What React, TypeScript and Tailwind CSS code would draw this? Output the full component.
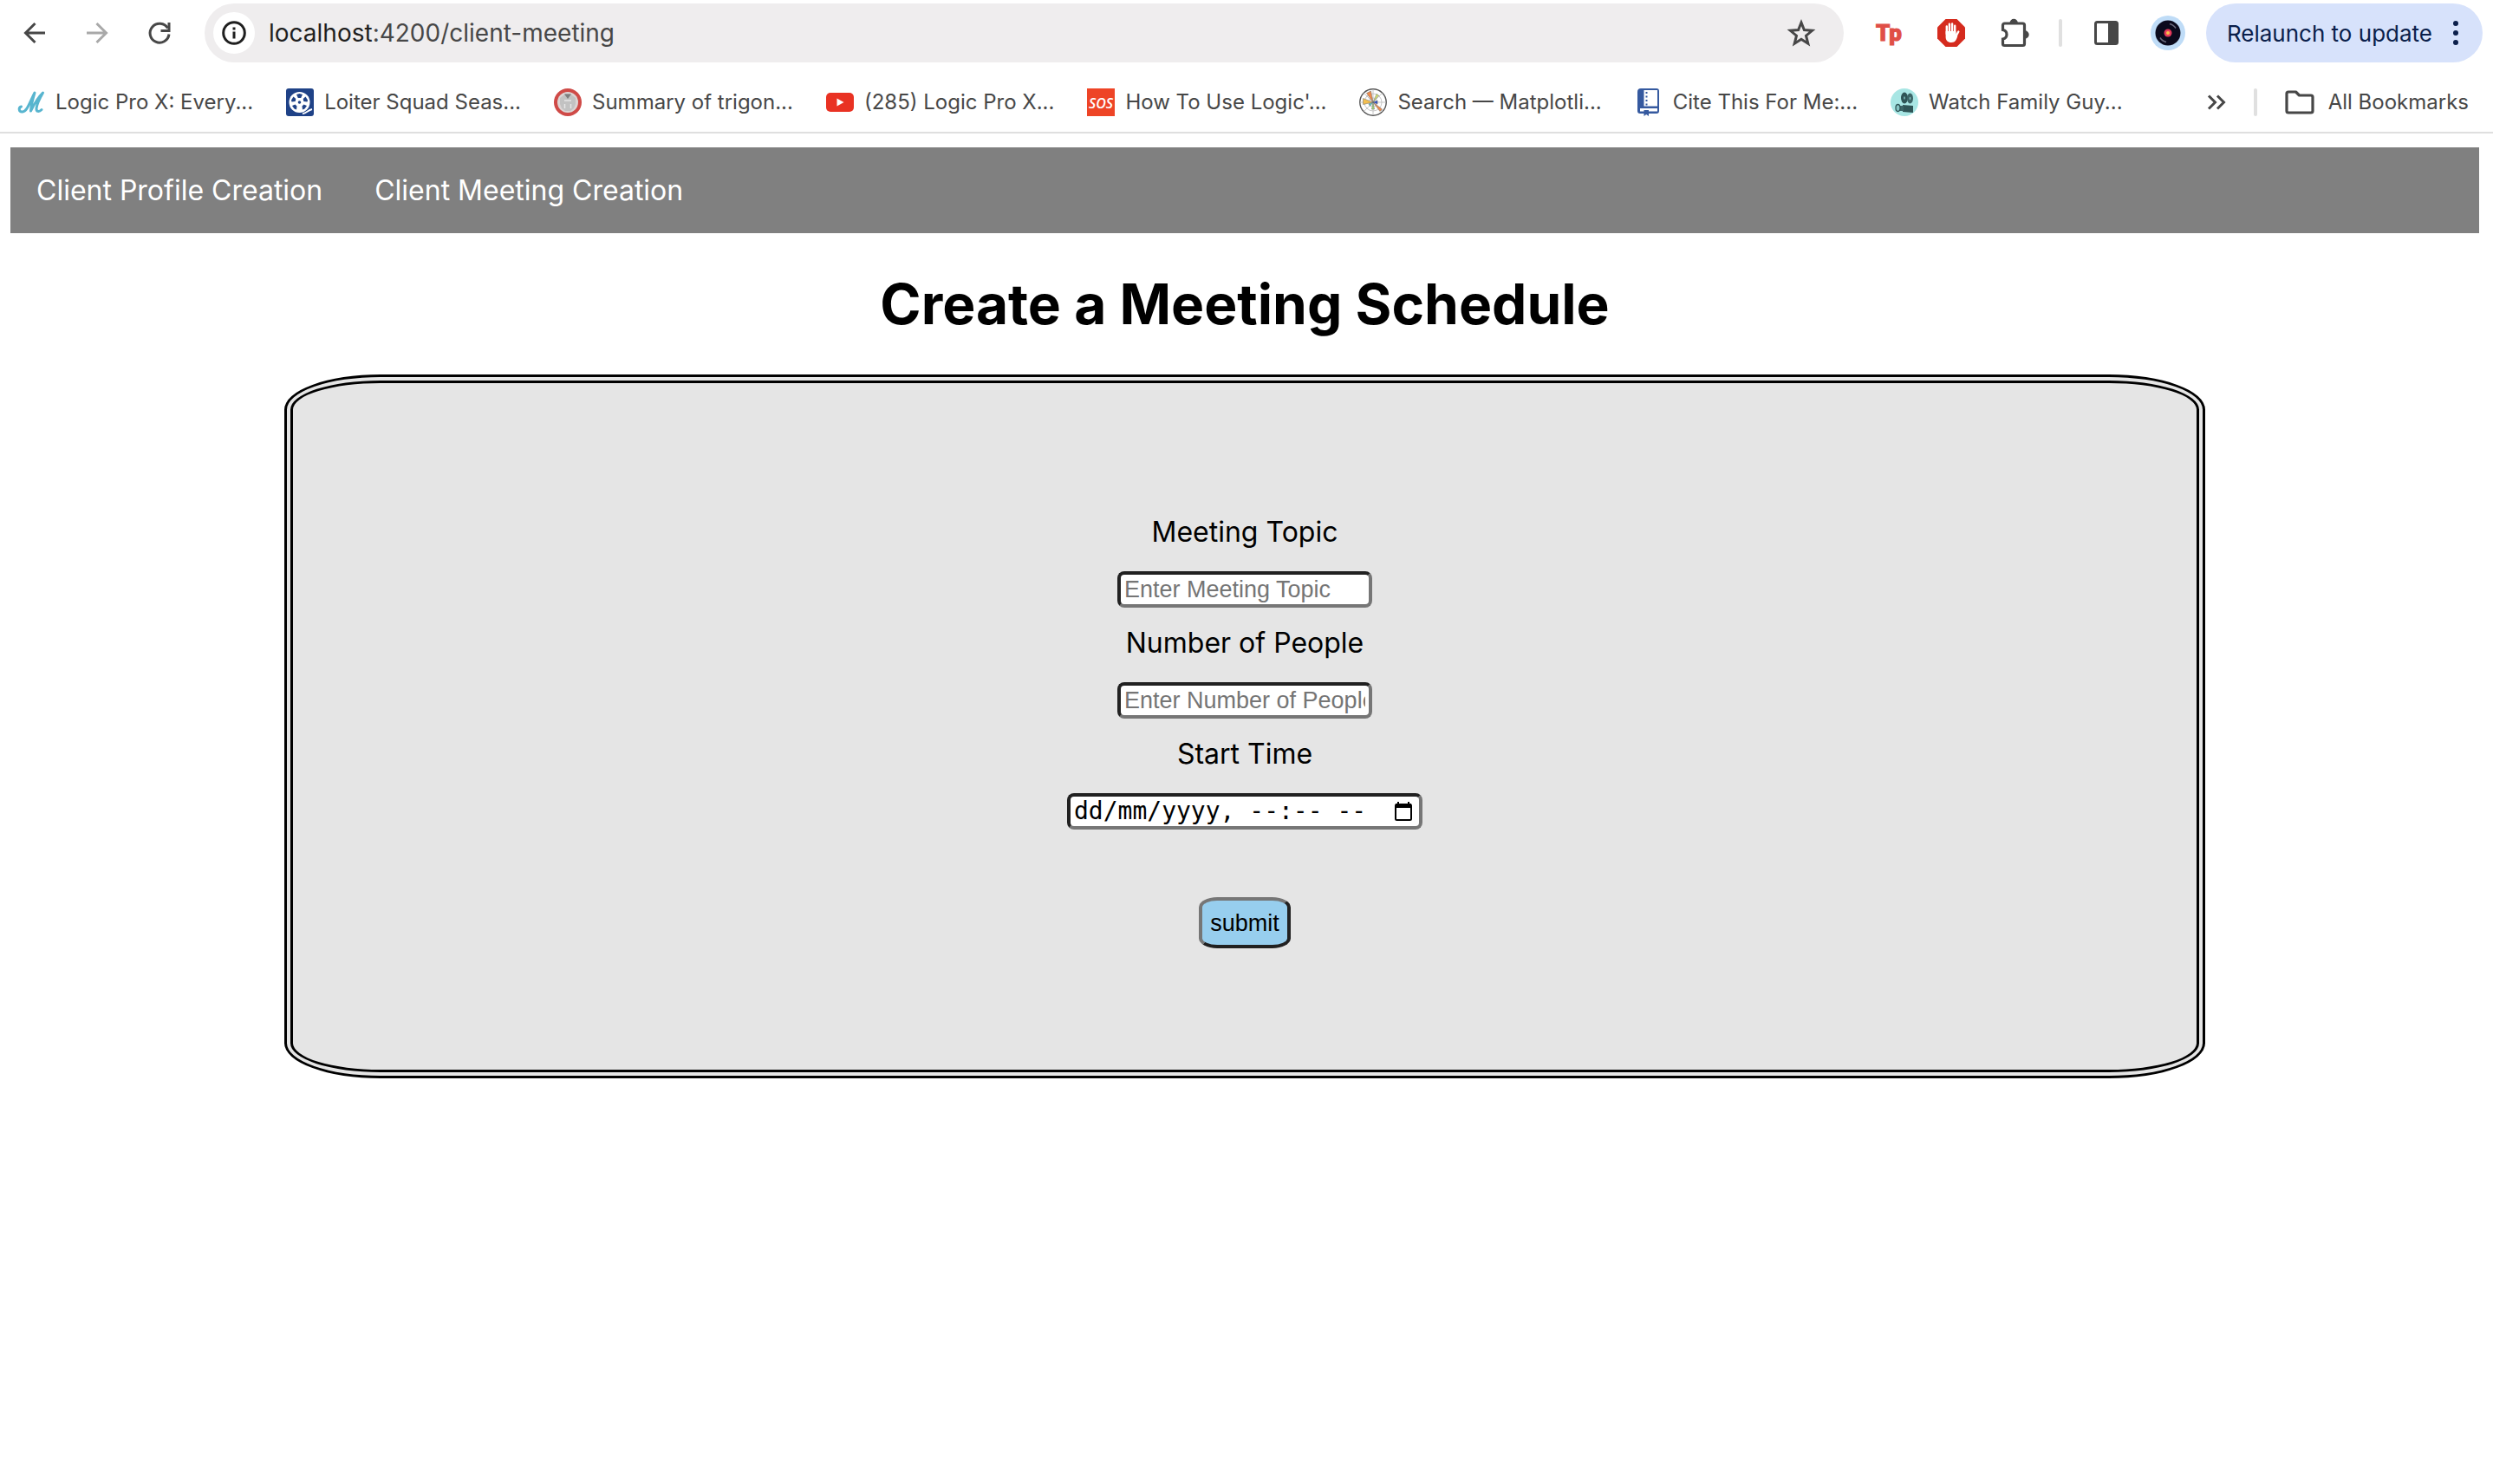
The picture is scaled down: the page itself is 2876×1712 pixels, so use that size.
import React from 'react';

const ink = '#474747';

function BackIcon({ color = ink, flip = false }: { color?: string; flip?: boolean }) {
  return (
    <svg width="32" height="32" viewBox="0 0 32 32" fill="none" stroke={color} strokeWidth="3" className={flip ? 'rotate-180' : ''}>
      <path d="M28 16H6M16.5 5L5.5 16l11 11" />
    </svg>
  );
}

function ReloadIcon() {
  return (
    <svg width="32" height="32" viewBox="0 0 32 32" fill="none" stroke={ink} strokeWidth="3">
      <path d="M25.500 10.500A11 11 0 1 0 27 17.500" />
      <path d="M27 4v9.500h-9.500" />
    </svg>
  );
}

function InfoIcon() {
  return (
    <svg width="28" height="28" viewBox="0 0 28 28" fill="none" stroke="#1f1f1f" strokeWidth="3">
      <circle cx="14" cy="14" r="12.300" />
      <path d="M14 12.500v8M14 7.500v3" />
    </svg>
  );
}

function StarIcon() {
  return (
    <svg width="34" height="34" viewBox="0 0 34 34" fill="none" stroke={ink} strokeWidth="3">
      <path d="M17 5l3.400 8.600 9.200.7-7.100 5.900 2.300 9L17 24.300l-7.800 4.900 2.300-9-7.100-5.900 9.200-.7z" />
    </svg>
  );
}

function TpIcon() {
  return (
    <svg width="32" height="32" viewBox="0 0 32 32">
      <text x="1" y="25" fill="#e04f47" stroke="#e04f47" strokeWidth="1" fontFamily="Roboto, sans-serif" fontWeight="900" fontSize="26">Tp</text>
    </svg>
  );
}

function HandIcon() {
  return (
    <svg width="32" height="32" viewBox="0 0 32 32">
      <path d="M9.500 0h13L32 9.500v13L22.500 32h-13L0 22.500v-13z" fill="#d52b1e" />
      <g stroke="#fff" strokeWidth="2.400" strokeLinecap="round" fill="none">
        <path d="M10.800 17V8.500M13.900 16V5.800M17.100 16V5.500M20.200 17V7.800M20.500 21.500l3.800-7" />
      </g>
      <path d="M9.600 14h11.800v6l2-1c-1.200 4.500-2.600 8-7.200 8-4.400 0-6.600-2.500-6.600-6.500z" fill="#fff" />
    </svg>
  );
}

function PuzzleIcon() {
  return (
    <svg width="36" height="36" viewBox="0 0 36 36">
      <path d="M3.500 9a2 2 0 0 1 2-2h21a2 2 0 0 1 2 2v21.500a2 2 0 0 1-2 2h-21a2 2 0 0 1-2-2v-5.500c6-1 6-9.500 0-10.500z" fill="none" stroke={ink} strokeWidth="3.200" />
      <path d="M11.500 6.500a4.700 4.700 0 0 1 9.400 0zM29 15.300a4.700 4.700 0 0 1 0 9.400z" fill={ink} />
    </svg>
  );
}

function PanelIcon() {
  return (
    <svg width="30" height="30" viewBox="0 0 30 30">
      <rect x="2.500" y="2.500" width="25" height="25" rx="2" fill="none" stroke={ink} strokeWidth="3" />
      <rect x="17" y="2" width="11" height="26" fill={ink} />
    </svg>
  );
}

function VinylIcon() {
  return (
    <svg width="40" height="40" viewBox="0 0 40 40">
      <circle cx="20" cy="20" r="20" fill="#bfdcf7" />
      <circle cx="20" cy="20" r="14.500" fill="#0b0a1c" />
      <path d="M22 9.500a11 11 0 0 1 7 5M18 30.500a11 11 0 0 1-7-5" stroke="#6a6a7c" strokeWidth="1.500" fill="none" />
      <circle cx="20" cy="20" r="4.500" fill="#e5395c" />
      <circle cx="20" cy="20" r="2" fill="#f7c04a" />
    </svg>
  );
}

function ScriptLogo() {
  return (
    <svg width="32" height="32" viewBox="0 0 32 32" fill="none" stroke="#58b5cf" strokeWidth="3" strokeLinecap="round" strokeLinejoin="round">
      <path d="M4.500 21C1 22 1.500 27.500 6 27c5-.5 7-8 14-22-2.500 8-4 14-4.500 21C19 19 23 11 29.500 5c-4 7-7 13-7.500 18-.3 4 3 4.500 6 1.500" />
    </svg>
  );
}

function ReelLogo() {
  return (
    <svg width="32" height="32" viewBox="0 0 32 32">
      <rect width="32" height="32" rx="3" fill="#1f4287" />
      <circle cx="15.500" cy="16" r="12" fill="#fff" />
      <path d="M19 29c4 .5 6-4 11-5" stroke="#fff" strokeWidth="1.800" fill="none" />
      <g fill="#1f4287">
        <circle cx="15.500" cy="16" r="1.800" />
        <path d="M12 7l3.500-1 3.500 1-1.800 4h-3.400zM22.500 9.500l2.500 4-.5 2-4.200-.5-.6-3zM8.500 9.500l-2.500 4 .5 2 4.200-.5.600-3zM24 20l-2.500 3.500-2.500 1-.5-4 2-2zM7 20l2.500 3.500 2.500 1 .5-4-2-2z" />
      </g>
    </svg>
  );
}

function CrestLogo() {
  return (
    <svg width="32" height="32" viewBox="0 0 32 32">
      <circle cx="16" cy="16" r="16" fill="#cf4a47" />
      <circle cx="16" cy="16" r="12" fill="#dcd5d4" />
      <path d="M7 11l4-3 2-2h6l2 2 4 3v7l-2 5-4 3h-6l-4-3-2-5z" fill="#c2c2c2" />
      <path d="M12 6.500h8L16 12z" fill="#7d7d7d" />
      <path d="M12 14h8M12.500 18v5M19.500 18v5" stroke="#e6e6e6" strokeWidth="1.500" />
    </svg>
  );
}

function VideoLogo() {
  return (
    <svg width="32" height="32" viewBox="0 0 32 32">
      <rect y="5" width="32" height="22" rx="5" fill="#e93223" />
      <path d="M12.500 11.500v9l8-4.500z" fill="#fff" />
    </svg>
  );
}

function SosLogo() {
  return (
    <svg width="32" height="32" viewBox="0 0 32 32">
      <rect width="32" height="32" fill="#ee4426" />
      <text x="16" y="23" textAnchor="middle" fill="#fff" fontFamily="'Open Sans', sans-serif" fontSize="16" fontWeight="600" fontStyle="italic">SOS</text>
    </svg>
  );
}

function PlotLogo() {
  return (
    <svg width="32" height="32" viewBox="0 0 32 32">
      <circle cx="16" cy="16" r="15.200" fill="#fff" stroke="#555" strokeWidth="1.400" />
      <g fill="none" stroke="#b9b9b9" strokeWidth="0.800">
        <circle cx="16" cy="16" r="5" />
        <circle cx="16" cy="16" r="10" />
        <path d="M16 1v30M1 16h30M5.400 5.400l21.200 21.200M26.600 5.400L5.400 26.600" />
      </g>
      <g stroke="#666" strokeWidth="0.500">
        <path d="M16 16L8.500 5.500l5-2.500z" fill="#f08c4b" />
        <path d="M16 16L4.500 11.500v7z" fill="#f3bf4f" />
        <path d="M16 16l4-9.500 2.500 1.500z" fill="#d8e86a" />
        <path d="M16 16l10.500 8-2.500 2.500z" fill="#f08c4b" />
        <path d="M16 16l-1.500 8h3z" fill="#a6dd78" />
        <path d="M16 16l5-2v4z" fill="#2a4fd0" />
        <path d="M16 16l-5 2 1.500 2.500z" fill="#5fc9c9" />
      </g>
    </svg>
  );
}

function BookLogo() {
  return (
    <svg width="32" height="32" viewBox="0 0 32 32">
      <path d="M7 0h18a3 3 0 0 1 3 3v23a3 3 0 0 1-3 3H16v3l-2.800-2L10.500 32v-3H6a3 3 0 0 1-3-3V4a4 4 0 0 1 4-4z" fill="#35599f" />
      <path d="M10.500 2H26v18.500H10.500zM6 23h20v3.500H16V25h-5.500v1.500H6z" fill="#fff" />
      <path d="M13.500 4v16" stroke="#35599f" strokeWidth="2" strokeDasharray="2 2.500" />
    </svg>
  );
}

function CameraLogo() {
  return (
    <svg width="32" height="32" viewBox="0 0 32 32">
      <circle cx="16" cy="16" r="16" fill="#a8e6e4" />
      <ellipse cx="16" cy="11" rx="4" ry="6.500" fill="#2f5557" />
      <ellipse cx="22.500" cy="11.500" rx="3.500" ry="6" fill="#3c6567" />
      <ellipse cx="16" cy="11" rx="0.800" ry="1.800" fill="#86c4c3" />
      <ellipse cx="22.500" cy="11.500" rx="0.800" ry="1.800" fill="#86c4c3" />
      <path d="M14 19l12 1v8l-12-1z" fill="#2f5557" />
      <path d="M9 20h6v6H9z" fill="#3c6567" />
      <ellipse cx="8.500" cy="22.500" rx="2.500" ry="4" fill="#86c4c3" stroke="#2f5557" strokeWidth="1.300" />
    </svg>
  );
}

function FolderIcon() {
  return (
    <svg width="34" height="28" viewBox="0 0 34 28" fill="none" stroke={ink} strokeWidth="3.200" strokeLinejoin="round">
      <path d="M2 4a2 2 0 0 1 2-2h8.500l4 4H30a2 2 0 0 1 2 2v16a2 2 0 0 1-2 2H4a2 2 0 0 1-2-2z" />
    </svg>
  );
}

function CalendarIcon() {
  return (
    <svg width="20" height="22" viewBox="0 0 20 22">
      <rect x="1" y="3" width="18" height="18" rx="1.500" fill="none" stroke="#000" strokeWidth="2" />
      <path d="M1 2h18v5H1zM3 0h2v3H3zM15 0h2v3h-2z" fill="#000" />
    </svg>
  );
}

const bookmarks = [
  { label: 'Logic Pro X: Every...', icon: <ScriptLogo /> },
  { label: 'Loiter Squad Seas...', icon: <ReelLogo /> },
  { label: 'Summary of trigon...', icon: <CrestLogo /> },
  { label: '(285) Logic Pro X...', icon: <VideoLogo /> },
  { label: "How To Use Logic'...", icon: <SosLogo /> },
  { label: 'Search — Matplotli...', icon: <PlotLogo /> },
  { label: 'Cite This For Me:...', icon: <BookLogo /> },
  { label: 'Watch Family Guy...', icon: <CameraLogo /> },
];

function Toolbar() {
  return (
    <div className="flex h-[76px] items-center pl-6 pr-3">
      <div className="flex items-center gap-10">
        <button aria-label="Back"><BackIcon /></button>
        <button aria-label="Forward"><BackIcon color="#a9a9a9" flip /></button>
        <button aria-label="Reload"><ReloadIcon /></button>
      </div>
      <div className="ml-9 flex h-[68px] flex-1 items-center rounded-full bg-[#efedee] pl-[10px] pr-8">
        <button aria-label="Site information" className="flex size-12 items-center justify-center rounded-full bg-white">
          <InfoIcon />
        </button>
        <p className="ml-4 flex-1 text-[28px] text-[#474747]">
          <span className="text-[#1f1f1f]">localhost</span>:4200/client-meeting
        </p>
        <button aria-label="Bookmark this page"><StarIcon /></button>
      </div>
      <div className="ml-9 flex items-center gap-10">
        <button aria-label="Tp extension"><TpIcon /></button>
        <button aria-label="Ad blocker"><HandIcon /></button>
        <button aria-label="Extensions"><PuzzleIcon /></button>
      </div>
      <div className="ml-8 h-8 w-1 rounded-full bg-[#e0e0e0]" />
      <button aria-label="Side panel" className="ml-9"><PanelIcon /></button>
      <button aria-label="Profile" className="ml-9"><VinylIcon /></button>
      <button className="ml-6 flex h-[68px] items-center gap-6 rounded-full bg-[#d7e2fb] pl-6 pr-7 text-[26px] text-[#0b1f4b]">
        Relaunch to update
        <svg width="6" height="28" viewBox="0 0 6 28" fill="#0b1f4b">
          <circle cx="3" cy="3" r="3" /><circle cx="3" cy="14" r="3" /><circle cx="3" cy="25" r="3" />
        </svg>
      </button>
    </div>
  );
}

function BookmarksBar() {
  return (
    <div className="flex h-[78px] items-center border-b-2 border-[#dfdfdf] pl-5 pr-7 pt-2 text-[24px] text-[#474747]">
      <div className="flex items-center gap-[38px]">
        {bookmarks.map((b) => (
          <a key={b.label} href="#" className="flex items-center gap-3 whitespace-nowrap">
            {b.icon}
            {b.label}
          </a>
        ))}
      </div>
      <button aria-label="More bookmarks" className="ml-auto">
        <svg width="22" height="18" viewBox="0 0 22 18" fill="none" stroke={ink} strokeWidth="3">
          <path d="M2 1.500L9.500 9 2 16.500M12 1.500L19.500 9 12 16.500" />
        </svg>
      </button>
      <div className="ml-8 h-8 w-1 rounded-full bg-[#e0e0e0]" />
      <a href="#" className="ml-8 flex items-center gap-4">
        <FolderIcon />
        All Bookmarks
      </a>
    </div>
  );
}

const fieldClass =
  'mt-[25px] h-[42px] rounded-lg border-4 border-t-[#212121] border-l-[#212121] border-b-[#767676] border-r-[#767676] bg-white px-1 outline-none';

export default function App() {
  return (
    <div className="min-h-screen bg-white font-['Inter',sans-serif] text-black">
      <Toolbar />
      <BookmarksBar />
      <div className="ml-3 mr-4 pt-4">
        <nav className="flex h-[99px] items-center gap-[60px] bg-[#808080] px-[30px] text-[32px] text-white">
          <a href="#">Client Profile Creation</a>
          <a href="#">Client Meeting Creation</a>
        </nav>
        <main>
          <h1 className="py-[41px] text-center text-[64px] leading-[81px] font-bold">Create a Meeting Schedule</h1>
          <form
            onSubmit={(e) => e.preventDefault()}
            className="mx-auto flex w-7/9 flex-col items-center rounded-[5%] border-[10px] border-double border-black bg-[#e5e5e5] pt-[152px] pb-[140px] text-[32px] leading-10"
          >
            <label htmlFor="topic">Meeting Topic</label>
            <input
              id="topic"
              placeholder="Enter Meeting Topic"
              className={`${fieldClass} w-[294px] font-['Liberation_Sans',sans-serif] text-[27px] placeholder:text-[#757575]`}
            />
            <label htmlFor="people" className="mt-[21px]">Number of People</label>
            <input
              id="people"
              placeholder="Enter Number of People"
              className={`${fieldClass} w-[294px] font-['Liberation_Sans',sans-serif] text-[27px] placeholder:text-[#757575]`}
            />
            <label htmlFor="start" className="mt-[21px]">Start Time</label>
            <div className={`${fieldClass} flex w-[410px] items-center`}>
              <input
                id="start"
                placeholder="dd/mm/yyyy, --:-- --"
                className="min-w-0 flex-1 font-['DejaVu_Sans_Mono',monospace] text-[28px] leading-8 outline-none placeholder:text-black"
              />
              <button type="button" aria-label="Open calendar" className="mr-1">
                <CalendarIcon />
              </button>
            </div>
            <button
              type="submit"
              className="mt-[78px] h-[59px] w-[106px] rounded-[20%] border-4 border-t-[#767676] border-l-[#767676] border-b-[#212121] border-r-[#212121] bg-[#97ceee] font-['Liberation_Sans',sans-serif] text-[27px]"
            >
              submit
            </button>
          </form>
        </main>
      </div>
    </div>
  );
}
